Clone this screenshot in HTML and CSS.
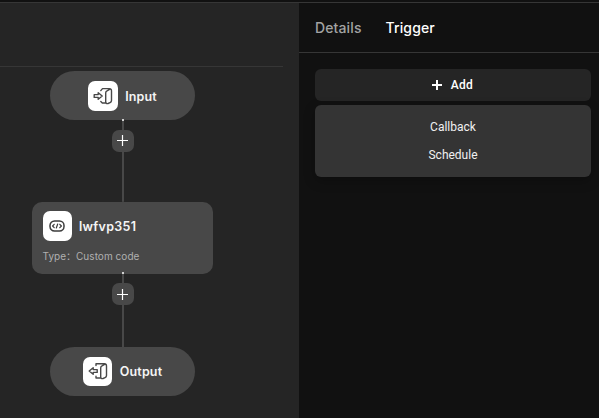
FILE: index.html
```html
<!DOCTYPE html>
<html lang="en">
<head>
<meta charset="utf-8">
<title>Workflow editor</title>
<link rel="stylesheet" href="styles.css">
</head>
<body>
<div class="app">
  <main class="canvas">
    <div class="toolbar"></div>
    <div class="flow">
      <div class="node pill">
        <span class="tile">
          <svg width="20" height="20" viewBox="0 0 20 20" fill="none" stroke="#484848" stroke-width="1.4" stroke-linejoin="round" stroke-linecap="round">
            <path d="M1.2 8.6h4V6.700l4 3.300-4 3.300v-1.900h-4z"/>
            <path d="M7.800 4.600 9.500 2.600h7c1.200 0 2 1 2 2.200v9.700c0 1-.5 1.700-1.400 2.100l-2.100.9c-1.300.5-2.300-.2-2.300-1.500V7c0-1 .5-1.700 1.300-2.100l3.500-2M7.800 15.500 9.300 17h4"/>
          </svg>
        </span>
        <span class="name">Input</span>
      </div>
      <div class="link">
        <i class="port"></i>
        <button class="insert" aria-label="Insert node"><svg width="11" height="11" viewBox="0 0 11 11" stroke="#fff" stroke-width="1.200"><path d="M5.500 0v11M0 5.500h11"/></svg></button>
      </div>
      <div class="node card">
        <div class="card-head">
          <span class="tile">
            <svg width="16" height="12" viewBox="0 0 16 12" fill="none" stroke="#3c3c3c" stroke-width="1.500" stroke-linecap="round" stroke-linejoin="round">
              <rect x="1" y="1" width="14" height="10" rx="4.500"/>
              <path d="M5.200 4.300 3.600 6l1.600 1.700M10.800 4.300 12.400 6l-1.600 1.700M8.700 4 7.300 8" stroke-width="1.200"/>
            </svg>
          </span>
          <span class="name title">lwfvp351</span>
        </div>
        <div class="type"><span class="type-label">Type：</span><span>Custom code</span></div>
      </div>
      <div class="link lower">
        <i class="port"></i>
        <button class="insert" aria-label="Insert node"><svg width="11" height="11" viewBox="0 0 11 11" stroke="#fff" stroke-width="1.200"><path d="M5.500 0v11M0 5.500h11"/></svg></button>
      </div>
      <div class="node pill">
        <span class="tile">
          <svg width="20" height="20" viewBox="0 0 20 20" fill="none" stroke="#484848" stroke-width="1.400" stroke-linejoin="round" stroke-linecap="round">
            <path d="M9.200 8.600h-4V6.700l-4 3.300 4 3.300v-1.900h4z"/>
            <path d="M8 4.600V2.800h8.500c1.200 0 2 1 2 2.200v9.500c0 1-.5 1.700-1.400 2.100l-2.100.9c-1.300.5-2.300-.2-2.300-1.500V7c0-1 .5-1.700 1.300-2.100l3.500-2M8 15.200V17h5"/>
          </svg>
        </span>
        <span class="name">Output</span>
      </div>
    </div>
  </main>
  <aside class="panel">
    <nav class="tabs">
      <span class="tab">Details</span>
      <span class="tab active">Trigger</span>
    </nav>
    <div class="content">
      <button class="add"><svg width="10" height="10" viewBox="0 0 10 10" stroke="#fff" stroke-width="2"><path d="M5 0v10M0 5h10"/></svg><span>Add</span></button>
      <div class="menu">
        <div class="item">Callback</div>
        <div class="item">Schedule</div>
      </div>
    </div>
  </aside>
</div>
</body>
</html>
```
FILE: styles.css
```css
* { box-sizing: border-box; }
body {
  margin: 0;
  background: #111;
  color: #fff;
  font-family: Inter, "Noto Sans CJK SC", sans-serif;
}
button { border: 0; padding: 0; color: inherit; font: inherit; }
svg { display: block; }
.app {
  display: flex;
  height: 418px;
  padding-top: 2px;
  overflow: hidden;
}
.canvas {
  width: 299px;
  background: #252525;
  border-top: 1px solid #363636;
}
.toolbar {
  width: 283px;
  height: 64px;
  border-bottom: 1px solid #363636;
}
.flow {
  display: flex;
  flex-direction: column;
  align-items: center;
  width: 245px;
  padding-top: 4.400px;
}
.node { background: #484848; }
.pill {
  display: flex;
  align-items: center;
  justify-content: center;
  gap: 7.500px;
  width: 145px;
  height: 49px;
  border-radius: 24.500px;
}
.tile {
  display: flex;
  flex: none;
  align-items: center;
  justify-content: center;
  width: 29.500px;
  height: 29.500px;
  border-radius: 7px;
  background: #fff;
}
.name {
  padding-top: 2px;
  color: #f5f5f5;
  font-size: 12.500px;
  font-weight: 600;
  line-height: 16px;
  letter-spacing: .15px;
}
.link {
  display: flex;
  flex-direction: column;
  align-items: center;
  width: 22px;
  height: 81.600px;
  background: linear-gradient(#484848, #484848) center / 2px 100% no-repeat;
}
.lower { height: 73px; }
.port {
  width: 2px;
  height: 2px;
  margin-top: -1.500px;
  border-radius: 1px;
  background: #fff;
}
.insert {
  display: flex;
  align-items: center;
  justify-content: center;
  width: 22px;
  height: 22px;
  margin-top: 9px;
  border-radius: 7px;
  background: #484848;
}
.card {
  width: 181px;
  height: 72px;
  padding: 9.500px 10.500px;
  border-radius: 10px;
}
.card-head { display: flex; align-items: center; gap: 7px; }
.title { letter-spacing: .3px; }
.type {
  display: flex;
  margin-top: 8px;
  color: #b0b0b0;
  font-size: 10px;
  line-height: 14px;
  letter-spacing: .05px;
}
.type-label { width: 33.500px; white-space: nowrap; }
.panel {
  flex: 1;
  border-top: 1px solid #363636;
  background: #111;
}
.tabs {
  display: flex;
  align-items: center;
  gap: 24px;
  height: 50px;
  padding-left: 16px;
  border-bottom: 1px solid #363636;
  font-size: 14px;
  font-weight: 550;
  letter-spacing: .12px;
}
.tab { color: #a3a3a3; }
.active { color: #fff; }
.content {
  display: flex;
  flex-direction: column;
  gap: 4px;
  padding: 16px 8px 0 16px;
  font-family: Roboto, sans-serif;
  font-size: 12px;
}
.add {
  display: flex;
  align-items: center;
  justify-content: center;
  gap: 9px;
  height: 32px;
  padding-right: 1px;
  border-radius: 6px;
  background: #252525;
  font-weight: 550;
  letter-spacing: .3px;
}
.menu {
  height: 72px;
  padding: 8px 0;
  border-radius: 6px;
  background: #343434;
  box-shadow: 0 4px 12px rgba(0, 0, 0, .25);
}
.item {
  height: 28px;
  color: #f0f0f0;
  line-height: 28px;
  text-align: center;
}
```
